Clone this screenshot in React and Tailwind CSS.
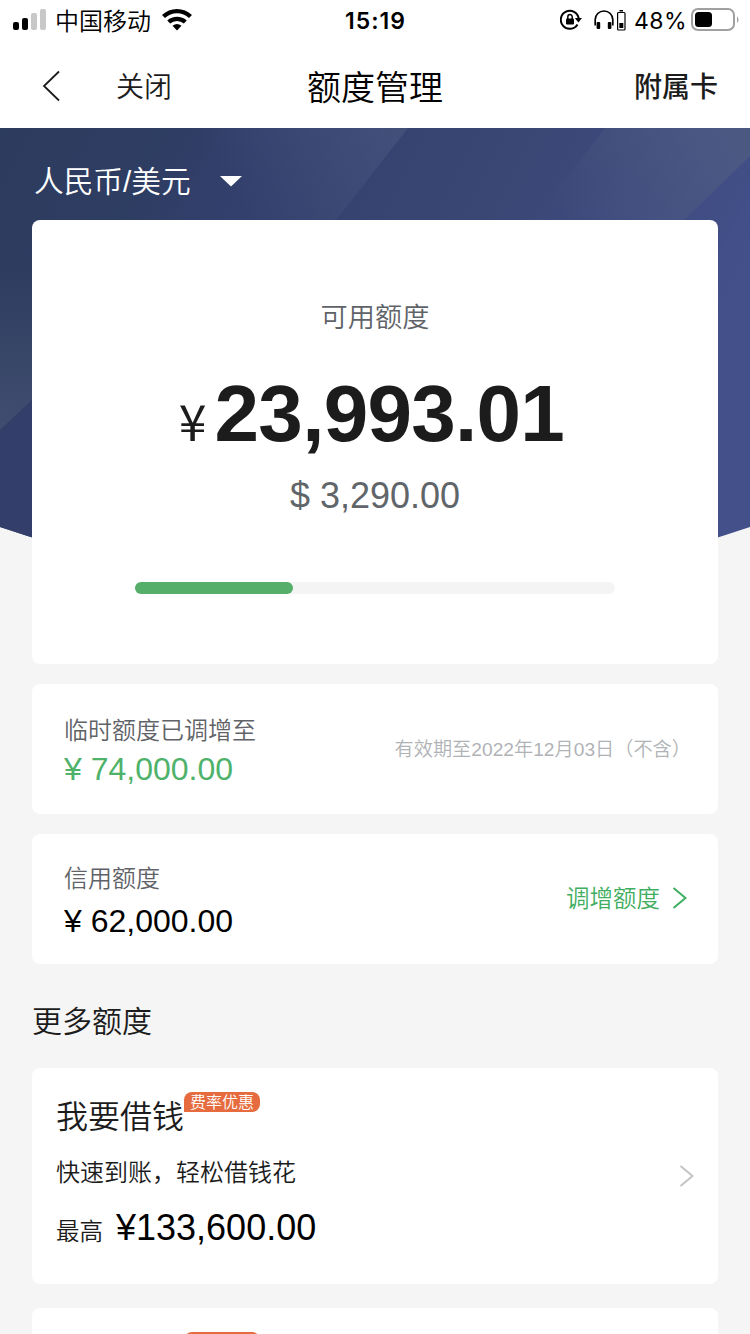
const StatusBar = () => (
  <div className="h-10 pl-3 pr-[11px] grid grid-cols-3 items-center text-black">
    <div className="flex items-center">
      <svg width="34" height="22" viewBox="0 0 34 22">
        <rect x="1" y="13" width="6" height="8" rx="2" fill="#000" />
        <rect x="10" y="9" width="6" height="12" rx="2" fill="#000" />
        <rect x="19" y="4" width="6" height="17" rx="2" fill="#c8c8c8" />
        <rect x="28" y="0" width="6" height="21" rx="2" fill="#c8c8c8" />
      </svg>
      <span className="ml-[9px] pt-[3px] text-2xl leading-8 font-[350]">中国移动</span>
      <svg className="ml-[10px]" width="32" height="24" viewBox="0 0 32 24">
        <g fill="none" stroke="#000" strokeWidth="4.300">
          <path d="M2.500 8.500 A19.500 19.500 0 0 1 29.500 8.500" />
          <path d="M7.700 14 A12.500 12.500 0 0 1 24.300 14" />
        </g>
        <path d="M11.500 17.800 Q16 14.300 20.500 17.800 L16 22.500 Z" fill="#000" />
      </svg>
    </div>
    <div className="pt-[2px] text-center font-['Inter','Liberation_Sans',sans-serif] text-[23px] leading-8 font-semibold tracking-[1px]">15:19</div>
    <div className="flex items-center justify-end">
      <svg width="22" height="22" viewBox="0 0 22 22">
        <path d="M17.500 15.500 A9 9 0 1 1 18.700 9.500" fill="none" stroke="#000" strokeWidth="2" />
        <path d="M14.800 9 H22 L18.400 13.500 Z" fill="#000" />
        <rect x="6" y="9.500" width="8" height="6" rx="1" fill="#000" />
        <path d="M7.800 10 V8 a2.200 2.400 0 0 1 4.400 0 V10" fill="none" stroke="#000" strokeWidth="1.500" />
      </svg>
      <svg className="ml-3" width="20" height="20" viewBox="0 0 20 20">
        <path d="M1.200 15.500 V9.500 A8.800 8.500 0 0 1 18.800 9.500 V15.500" fill="none" stroke="#000" strokeWidth="1.700" />
        <rect x="2.600" y="12" width="3.600" height="7" rx="1" fill="#000" />
        <rect x="13.800" y="12" width="3.600" height="7" rx="1" fill="#000" />
      </svg>
      <svg className="ml-[3px]" width="9" height="21" viewBox="0 0 9 21">
        <rect x="0.600" y="2.500" width="7.400" height="17.500" rx="1" fill="none" stroke="#000" strokeWidth="1.200" />
        <rect x="2.500" y="0" width="3.500" height="1.500" fill="#000" />
        <rect x="2.300" y="13" width="4" height="5" fill="#000" />
      </svg>
      <span className="ml-2 pt-[2px] font-['Inter','Liberation_Sans',sans-serif] text-[23px] leading-8 tracking-[0.4px]">48%</span>
      <svg className="ml-1" width="48" height="24" viewBox="0 0 48 24">
        <rect x="1" y="1" width="42" height="21" rx="6" fill="#fff" stroke="#a0a0a0" strokeWidth="2" />
        <rect x="4" y="4" width="17" height="15" rx="3.500" fill="#000" />
        <path d="M46 8 q3 4 0 7 Z" fill="#a0a0a0" />
      </svg>
    </div>
  </div>
);

const NavBar = () => (
  <div className="h-[88px] pl-[42px] pr-8 grid grid-cols-3 items-center pt-[7px]">
    <div className="flex items-center">
      <svg className="-mt-[4px]" width="18" height="32" viewBox="0 0 18 32" fill="none" stroke="#1c1c1c" strokeWidth="1.800">
        <path d="M17 1.500 L2 16 L17 30.500" />
      </svg>
      <span className="ml-14 text-[28px] leading-10 font-[350] text-[#1c1c1c]">关闭</span>
    </div>
    <h1 className="text-center text-[34px] leading-10 font-[350] text-black -ml-[10px]">额度管理</h1>
    <div className="text-right text-[28px] leading-10 font-medium text-[#1c1c1c]">附属卡</div>
  </div>
);

const HeroBackground = () => (
  <svg className="absolute inset-x-0 top-0" width="750" height="450" viewBox="0 0 750 450">
    <defs>
      <linearGradient id="base" x1="0" y1="0" x2="1" y2="0.300">
        <stop offset="0" stopColor="#2c3c5e" />
        <stop offset="0.200" stopColor="#2e3d62" />
        <stop offset="0.300" stopColor="#323f6b" />
        <stop offset="0.650" stopColor="#3a4674" />
        <stop offset="1" stopColor="#43508a" />
      </linearGradient>
      <linearGradient id="bandA" gradientUnits="userSpaceOnUse" x1="250" y1="90" x2="400" y2="0">
        <stop offset="0" stopColor="#4a5880" stopOpacity="0" />
        <stop offset="1" stopColor="#4a5880" stopOpacity="0.600" />
      </linearGradient>
      <linearGradient id="bandB" gradientUnits="userSpaceOnUse" x1="560" y1="90" x2="730" y2="0">
        <stop offset="0" stopColor="#4c5a82" stopOpacity="0" />
        <stop offset="1" stopColor="#4c5a82" stopOpacity="0.900" />
      </linearGradient>
      <linearGradient id="left" x1="0" y1="0" x2="0" y2="1">
        <stop offset="0" stopColor="#2c3c5e" />
        <stop offset="1" stopColor="#414d70" />
      </linearGradient>
      <linearGradient id="low" x1="0" y1="0" x2="0" y2="1">
        <stop offset="0" stopColor="#343e69" />
        <stop offset="1" stopColor="#333e6a" />
      </linearGradient>
      <clipPath id="curve">
        <path d="M0 0 H750 V399 Q375 526 0 399 Z" />
      </clipPath>
    </defs>
    <g clipPath="url(#curve)">
      <rect width="750" height="450" fill="url(#base)" />
      <path d="M150 0 H408 L322 110 H150 Z" fill="url(#bandA)" />
      <path d="M605 0 H750 V28 L680 96 H530 Z" fill="url(#bandB)" />
      <path d="M0 130 H60 V246 L0 302 Z" fill="url(#left)" />
      <path d="M0 302 L60 246 V450 H0 Z" fill="url(#low)" />
    </g>
  </svg>
);

const ChevronRight = ({ className }) => (
  <svg className={className} width="15" height="22" viewBox="0 0 15 22" fill="none" stroke="currentColor" strokeWidth="2">
    <path d="M1.500 1 L13.500 11 L1.500 21" />
  </svg>
);

const AvailableCard = () => (
  <div className="h-[444px] rounded-lg bg-white pt-[78px] flex flex-col items-center">
    <p className="text-[27.200px] leading-10 font-[350] text-[#5f6368]">可用额度</p>
    <div className="mt-7 -ml-[7px] h-24 flex items-baseline text-[#1c1c1c]">
      <span className="text-[50px] leading-24 mr-[8px] font-['Noto_Sans_CJK_SC',sans-serif]">¥</span>
      <span className="text-[80px] leading-24 font-bold tracking-[-0.700px]">23,993.01</span>
    </div>
    <p className="mt-[10px] text-4xl leading-12 text-[#5f6569]">$ 3,290.00</p>
    <div className="mt-[62px] h-3 w-[480px] rounded-md bg-[#f4f4f4]">
      <div className="h-3 w-[158px] rounded-md bg-[#55af6a]" />
    </div>
  </div>
);

const LimitRow = ({ label, amount, amountClass, children }) => (
  <div className="mt-5 h-[130px] rounded-lg bg-white px-8 flex items-center justify-between">
    <div className="pt-[6px]">
      <p className="text-2xl leading-8 font-[350] text-[#5f6368]">{label}</p>
      <p className={amountClass}>{amount}</p>
    </div>
    {children}
  </div>
);

const Badge = ({ children }) => (
  <span className="h-5 min-w-[76px] px-[6px] rounded-lg rounded-bl-none bg-[#e66b3e] text-base leading-[22px] font-[350] text-white">
    {children}
  </span>
);

const App = () => {
  return (
    <div className="w-[750px] h-[1334px] overflow-hidden bg-[#f5f5f5] font-['Liberation_Sans','Noto_Sans_CJK_SC',sans-serif]">
      <header className="bg-white">
        <StatusBar />
        <NavBar />
      </header>

      <main className="relative">
        <HeroBackground />
        <div className="relative px-8">
          <div className="h-[92px] pl-[2px] pt-[15px] flex items-center text-white">
            <span className="text-[29.700px] leading-10 font-[350]">人民币/美元</span>
            <svg className="ml-[29px]" width="22" height="11" viewBox="0 0 22 11">
              <path d="M0 0 H22 L11 10.500 Z" fill="#fff" />
            </svg>
          </div>

          <AvailableCard />

          <LimitRow
            label="临时额度已调增至"
            amount="¥ 74,000.00"
            amountClass="mt-[2px] text-[32px] leading-10 text-[#4fb26b]"
          >
            <span className="-mr-[5px] pt-[2px] text-[19.200px] leading-8 font-[350] text-[#b0b3b6]">有效期至2022年12月03日（不含）</span>
          </LimitRow>

          <LimitRow
            label="信用额度"
            amount="¥ 62,000.00"
            amountClass="mt-[6px] text-[32px] leading-10 text-black"
          >
            <div className="-mr-px flex items-center text-[#3fae60]">
              <span className="text-[23.500px] leading-8 font-[350]">调增额度</span>
              <ChevronRight className="ml-3 -mt-[2px]" />
            </div>
          </LimitRow>

          <h2 className="mt-[38px] text-[30px] leading-10 text-[#1c1c1c] font-[350]">更多额度</h2>

          <div className="mt-[26px] h-[216px] rounded-lg bg-white pl-6 pr-6 flex items-center justify-between">
            <div className="-mt-1 text-[#1c1c1c]">
              <div className="flex items-start">
                <span className="mt-[5px] text-[32px] leading-10 font-[350]">我要借钱</span>
                <Badge>费率优惠</Badge>
              </div>
              <p className="mt-[18px] text-2xl leading-9 font-[350]">快速到账，轻松借钱花</p>
              <div className="mt-[13px] flex items-baseline">
                <span className="text-[23.500px] leading-12 font-[350]">最高</span>
                <span className="ml-[13px] text-4xl leading-12 text-black">¥133,600.00</span>
              </div>
            </div>
            <ChevronRight className="text-[#c4c4c4]" />
          </div>

          <div className="mt-6 h-[216px] rounded-lg bg-white pt-6 pl-[152px] flex items-start">
            <Badge />
          </div>
        </div>
      </main>
    </div>
  );
};

export default App;
